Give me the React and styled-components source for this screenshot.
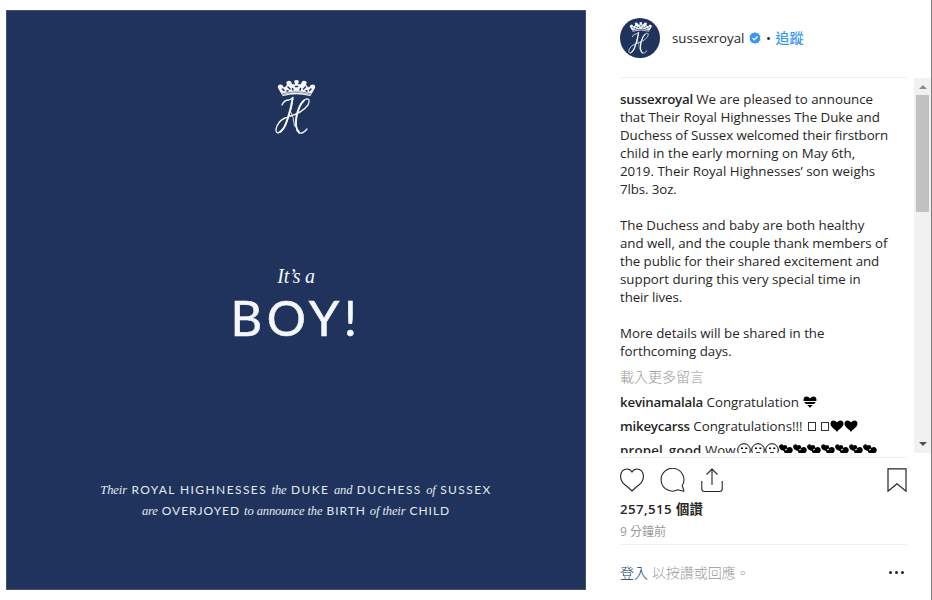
import styled, { createGlobalStyle } from "styled-components"

const GlobalStyle = createGlobalStyle`
  * {
    box-sizing: border-box;
  }
  body {
    margin: 0;
    background: #fff;
    color: #262626;
    font-family: "Open Sans", "Noto Sans CJK TC", sans-serif;
    font-size: 13.3px;
    line-height: 18px;
    overflow: hidden;
  }
`

const caption = [
  [
    ["We are pleased to announce", 0],
    ["that Their Royal Highnesses The Duke and", -0.02],
    ["Duchess of Sussex welcomed their firstborn", -0.08],
    ["child in the early morning on May 6th,", 0.02],
    ["2019. Their Royal Highnesses’ son weighs", 0.01],
    ["7lbs. 3oz.", -0.1],
  ],
  [
    ["The Duchess and baby are both healthy", -0.03],
    ["and well, and the couple thank members of", -0.03],
    ["the public for their shared excitement and", -0.05],
    ["support during this very special time in", 0],
    ["their lives.", -0.1],
  ],
  [
    ["More details will be shared in the", -0.02],
    ["forthcoming days.", 0],
  ],
]

const Monogram = ({ width, height }) => (
  <svg width={width} height={height} viewBox="0 0 42 56" fill="none" stroke="#f4f7fb" strokeLinecap="round">
    <path d="M7 15 3 8Q2 5 5 4.5Q8 4 8.5 7Q11 8 12 4Q10 2 13 1Q16 0 17 4L20 4.5L19 1Q21.5-1 24 1L23 4.5L26 4Q27 0 30 1Q33 2 31 4Q32 8 34.5 7Q35 4 38 4.5Q41 5 40 8L36 15Q22 10 7 15Z" fill="#f4f7fb" stroke="none" />
    <path d="M7.5 9l1.5 1.5M13 7l2 2M20.5 6.5h2M30.5 7l-2 2M36 9l-1.5 1.5M17.5 8.500l.5 1.500M25.5 8.500l-.5 1.500M12 11l1-.3M32 11l-1-.3" stroke="#20335c" strokeWidth="1.5" />
    <path d="M7 13.8Q21.500 9.8 36 13.8" stroke="#20335c" strokeWidth=".5" />
    <path d="M8 15.5Q21.500 11.5 35 15.5" strokeWidth="1.3" />
    <path d="M7 25Q9 20 14 20Q17 19 18 17Q17 28 13 38Q9 52 3 53Q-.5 52 2 46Q5 39 14 36.5Q27 33 33 25Q36 18 31 19Q25 22 22 34Q19 49 24 53Q28 54 32 49" strokeWidth="1.3" />
    <path d="M17.5 19Q16 29 12.5 39Q9.5 49 5 52M29 20.5Q24 25 21.5 36Q19.5 48 24 52" strokeWidth="1.9" />
    <path d="M15 30Q19 37 19.5 46" strokeWidth=".9" />
  </svg>
)

const Verified = () => (
  <svg width="12" height="12" viewBox="0 0 24 24">
    <path fill="#3897f0" d="M12 0l3 2.3 3.7-.3 1.2 3.5L23 7.7 22 12l1 4.3-3.1 2.2-1.2 3.5-3.7-.3L12 24l-3-2.3-3.7.3-1.2-3.5L1 16.3 2 12 1 7.7l3.1-2.2L5.3 2l3.7.3z" />
    <path fill="none" stroke="#fff" strokeWidth="2.6" d="M7 12.3l3.4 3.4L17 9" />
  </svg>
)

const Heart = () => (
  <svg width="24" height="24" viewBox="0 0 24 24" fill="none" stroke="#262626" strokeWidth="1.1">
    <path d="M12 23Q8 19 4.2 16.2C1.5 13.5.5 11 .6 7.8C.7 3.8 3.5 1 7 1C9.3 1 11 2.2 12 4.1C13 2.2 14.7 1 17 1C20.5 1 23.3 3.8 23.4 7.8C23.5 11 22.5 13.5 19.8 16.2Q16 19 12 23Z" />
  </svg>
)

const Bubble = () => (
  <svg width="25" height="24" viewBox="0 0 25 24" fill="none" stroke="#262626" strokeWidth="1.1">
    <path d="M22.2 17.7A11.4 11.4 0 1 0 17.8 21.8Q20 22.5 23.9 23.2Q23.4 20.5 22.2 17.7Z" strokeLinejoin="round" />
  </svg>
)

const Share = () => (
  <svg width="22" height="25" viewBox="0 0 22 25" fill="none" stroke="#262626" strokeWidth="1.1">
    <path d="M.8 13v8Q.8 23.5 3.5 23.5h15Q21.2 23.5 21.2 21v-8M11 17V1M5.5 6.5 11 1l5.5 5.5" />
  </svg>
)

const Bookmark = () => (
  <svg width="20" height="24" viewBox="0 0 20 24" fill="none" stroke="#262626" strokeWidth="1.2">
    <path d="M1 .8h18v22.4l-9-7.5-9 7.5z" />
  </svg>
)

const HeartGlyph = ({ striped }) => (
  <Glyph viewBox="0 0 14 14">
    <path fill="#000" d="M7 13C5 10 .5 8 .5 4.8C.5 1 5 .3 7 3.6C9 .3 13.5 1 13.5 4.8C13.5 8 9 10 7 13Z" />
    {striped && <path stroke="#fff" d="M0 6.5h14M0 9.5h14" />}
  </Glyph>
)

const FaceGlyph = () => (
  <Glyph viewBox="0 0 14 14">
    <circle cx="7" cy="7" r="6.3" fill="none" stroke="#000" />
    <path stroke="#000" strokeWidth="1.6" d="M4 5.2h2M8.3 5.2h2M5 10h4" />
  </Glyph>
)

const TwoHeartsGlyph = () => (
  <Glyph viewBox="0 0 14 14">
    <path fill="#000" d="M0 3Q2 0 4.5 2.5Q8 1 8.5 5Q11 3 13 5Q15.5 8 10 12Q5 11 5 8Q0 7 0 3Z" />
    <path stroke="#fff" d="M6 7l2-1" />
  </Glyph>
)

const App = () => {
  return (
    <Page>
      <GlobalStyle />
      <Photo>
        <Crest>
          <Monogram width={42} height={56} />
        </Crest>
        <ItsA>It’s a</ItsA>
        <Boy>BOY!</Boy>
        <Announcement>
          <Row $gap={1.4}>
            <em>Their</em> ROYAL HIGHNESSES <em>the</em> DUKE <em>and</em> DUCHESS <em>of</em> SUSSEX
          </Row>
          <Row $gap={0.95}>
            <em>are</em> OVERJOYED <em>to announce the</em> BIRTH <em>of their</em> CHILD
          </Row>
        </Announcement>
      </Photo>
      <Side>
        <Header>
          <Avatar>
            <Monogram width={25} height={33} />
          </Avatar>
          <Account>sussexroyal</Account>
          <Verified />
          <Dot>•</Dot>
          <Follow>追蹤</Follow>
        </Header>
        <Scroller>
          <Comments>
            {caption.map((lines, i) => (
              <Paragraph key={i}>
                {lines.map(([text, gap], j) => (
                  <Line key={text} $gap={gap}>
                    {i === 0 && j === 0 && <Name>sussexroyal </Name>}
                    {text}
                  </Line>
                ))}
              </Paragraph>
            ))}
            <LoadMore>載入更多留言</LoadMore>
            <Comment>
              <Name>kevinamalala</Name>&nbsp;Congratulation&nbsp;
              <Glyphs>
                <HeartGlyph striped />
              </Glyphs>
            </Comment>
            <Comment>
              <Name>mikeycarss</Name>&nbsp;Congratulations!!!&nbsp;
              <Boxes>
                <Missing />
                <Missing />
              </Boxes>
              <HeartGlyph />
              <HeartGlyph />
            </Comment>
            <Comment>
              <Name $gap={0.2}>propel_good</Name>&nbsp;Wow
              <Glyphs>
                {[0, 1, 2].map((n) => <FaceGlyph key={n} />)}
                {[0, 1, 2, 3, 4, 5, 6].map((n) => <TwoHeartsGlyph key={n} />)}
              </Glyphs>
            </Comment>
          </Comments>
          <ScrollBar>
            <Arrow $up />
            <Thumb />
            <Arrow />
          </ScrollBar>
        </Scroller>
        <Footer>
          <Actions>
            <Heart />
            <Bubble />
            <Share />
            <Save>
              <Bookmark />
            </Save>
          </Actions>
          <Likes>257,515 個讚</Likes>
          <Time>9 分鐘前</Time>
          <Login>
            <span>
              <LoginLink>登入</LoginLink> 以按讚或回應。
            </span>
            <More>
              <i />
              <i />
              <i />
            </More>
          </Login>
        </Footer>
      </Side>
    </Page>
  )
}

const Page = styled.div`
  display: flex;
  width: 932px;
  height: 600px;
  padding-left: 6px;
  border-right: 1px solid #7b7b7b;
  background: #fff;
`
const Photo = styled.div`
  display: flex;
  flex-direction: column;
  align-items: center;
  width: 580px;
  height: 580px;
  margin-top: 10px;
  flex-shrink: 0;
  background: #20335c;
  border: 1px solid #435273;
  color: #f4f7fb;
`
const Crest = styled.div`
  height: 56px;
  margin-top: 69px;
  svg {
    display: block;
  }
`
const ItsA = styled.div`
  margin-top: 127px;
  font: italic 20px/26px "Liberation Serif", serif;
  letter-spacing: -0.3px;
`
const Boy = styled.div`
  margin-top: 2px;
  font: 400 49px/52px Lato, sans-serif;
  letter-spacing: 4.6px;
  -webkit-text-stroke: 0.5px #f4f7fb;
`
const Announcement = styled.div`
  margin-top: 136px;
`
const Row = styled.div`
  font: 400 12px/21px Lato, sans-serif;
  letter-spacing: ${(p) => p.$gap}px;
  text-align: center;
  white-space: nowrap;
  color: #e3e9f4;
  em {
    font: italic 12.5px/20px "Liberation Serif", serif;
    letter-spacing: -0.1px;
  }
`
const Side = styled.div`
  flex: 1;
  min-width: 0;
  padding-left: 34px;
`
const Header = styled.div`
  display: flex;
  align-items: center;
  width: 287px;
  height: 78px;
  padding-bottom: 2px;
  border-bottom: 1px solid #efefef;
`
const Avatar = styled.div`
  display: flex;
  align-items: center;
  justify-content: center;
  width: 40px;
  height: 40px;
  padding-top: 2px;
  border-radius: 50%;
  margin-right: 12px;
  background: #20335c;
`
const Account = styled.span`
  font-weight: 500;
  margin-right: 5px;
`
const Dot = styled.span`
  width: 14px;
  text-align: center;
`
const Follow = styled.span`
  color: #3897f0;
  font-size: 14px;
  font-weight: 500;
`
const Scroller = styled.div`
  display: flex;
  justify-content: space-between;
  height: 375px;
`
const Comments = styled.div`
  width: 287px;
  height: 375px;
  padding-top: 12px;
  overflow: hidden;
`
const Paragraph = styled.div`
  margin-bottom: 18px;
`
const Line = styled.div`
  white-space: nowrap;
  letter-spacing: ${(p) => p.$gap}px;
`
const Name = styled.span`
  font-weight: 600;
  letter-spacing: ${(p) => p.$gap ?? -0.2}px;
`
const LoadMore = styled.div`
  margin: -10px 0 7px;
  font-size: 14px;
  font-weight: 300;
  color: #999;
`
const Comment = styled.div`
  display: flex;
  align-items: center;
  height: 18px;
  margin-bottom: 6px;
  white-space: nowrap;
`
const Glyph = styled.svg`
  width: 14px;
  height: 14px;
  flex-shrink: 0;
`
const Glyphs = styled.span`
  display: flex;
  margin-left: 1px;
`
const Boxes = styled.span`
  display: flex;
  gap: 5px;
  margin: 0 1px 0 2px;
`
const Missing = styled.i`
  width: 8px;
  height: 9px;
  border: 1px solid #333;
`
const ScrollBar = styled.div`
  display: flex;
  flex-direction: column;
  align-items: center;
  width: 17px;
  background: #f1f1f1;
`
const Arrow = styled.div`
  margin: ${(p) => (p.$up ? "7px 0 6px" : "auto 0 7px")};
  border: 4px solid transparent;
  ${(p) => (p.$up ? "border-top: 0; border-bottom-color: #8b8b8b;" : "border-bottom: 0; border-top-color: #505050;")}
`
const Thumb = styled.div`
  width: 13px;
  height: 117px;
  background: #c1c1c1;
`
const Footer = styled.div`
  width: 287px;
  margin-top: 4px;
  border-top: 1px solid #efefef;
`
const Actions = styled.div`
  display: flex;
  gap: 16px;
  height: 42px;
  padding-top: 10px;
`
const Save = styled.div`
  margin-left: auto;
`
const Likes = styled.div`
  font-weight: 600;
  letter-spacing: 0.4px;
`
const Time = styled.div`
  height: 26px;
  padding-top: 5px;
  font-size: 12px;
  color: #999;
`
const Login = styled.div`
  display: flex;
  align-items: center;
  justify-content: space-between;
  height: 56px;
  border-top: 1px solid #efefef;
  color: #999;
  font-size: 14px;
  font-weight: 300;
`
const LoginLink = styled.span`
  color: #003569;
`
const More = styled.div`
  display: flex;
  gap: 3px;
  padding-right: 3px;
  i {
    width: 3px;
    height: 3px;
    border-radius: 50%;
    background: #262626;
  }
`

export default App
